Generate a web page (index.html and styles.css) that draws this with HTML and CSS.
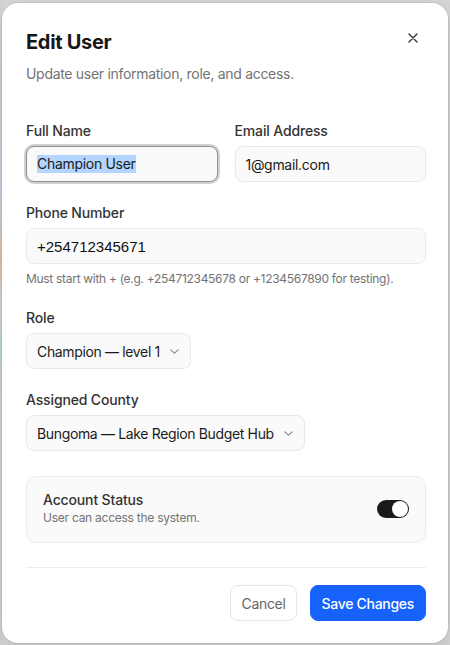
FILE: index.html
```html
<!DOCTYPE html>
<html lang="en">
<head>
<meta charset="utf-8">
<title>Edit User</title>
<link rel="stylesheet" href="styles.css">
</head>
<body>
<div class="backdrop">
  <div class="modal">
    <button class="close" aria-label="Close">
      <svg width="10" height="10" viewBox="0 0 10 10"><path d="M1 1L9 9M9 1L1 9" stroke="#333" stroke-width="1.4" stroke-linecap="round"/></svg>
    </button>
    <header class="head">
      <h1 class="title">Edit User</h1>
      <p class="desc">Update user information, role, and access.</p>
    </header>
    <div class="form">
      <div class="row2">
        <div class="field">
          <div class="label">Full Name</div>
          <div class="input focused"><span class="sel">Champion User</span></div>
        </div>
        <div class="field">
          <div class="label">Email Address</div>
          <div class="input">1@gmail.com</div>
        </div>
      </div>
      <div class="field">
        <div class="label">Phone Number</div>
        <div class="input tel">+254712345671</div>
        <div class="hint">Must start with + (e.g. +254712345678 or +1234567890 for testing).</div>
      </div>
      <div class="field">
        <div class="label">Role</div>
        <div class="select">Champion — level 1
          <svg class="chev" width="9" height="5" viewBox="0 0 9 5"><path d="M0.8 0.8L4.5 4.2L8.2 0.8" fill="none" stroke="#8a8a8a" stroke-width="1.1" stroke-linecap="round" stroke-linejoin="round"/></svg>
        </div>
      </div>
      <div class="field">
        <div class="label">Assigned County</div>
        <div class="select">Bungoma — Lake Region Budget Hub
          <svg class="chev" width="9" height="5" viewBox="0 0 9 5"><path d="M0.8 0.8L4.5 4.2L8.2 0.8" fill="none" stroke="#8a8a8a" stroke-width="1.1" stroke-linecap="round" stroke-linejoin="round"/></svg>
        </div>
      </div>
    </div>
    <div class="status">
      <div class="status-text">
        <div class="status-title">Account Status</div>
        <div class="status-sub">User can access the system.</div>
      </div>
      <div class="toggle"><div class="knob"></div></div>
    </div>
    <div class="divider"></div>
    <div class="footer">
      <button class="btn cancel">Cancel</button>
      <button class="btn save">Save Changes</button>
    </div>
  </div>
</div>
</body>
</html>
```
FILE: styles.css
```css
* { box-sizing: border-box; }
html, body { margin: 0; padding: 0; }
body {
  width: 450px;
  height: 645px;
  overflow: hidden;
  font-family: Inter, "Noto Sans", "Liberation Sans", sans-serif;
  letter-spacing: -0.3px;
  background:
    linear-gradient(to bottom, #d3d3d3 0, #c9d3e3 190px, #e3c3a8 262px, #d6d6d6 300px, #bfdcc8 345px, #d3d3d3 400px) left top / 2px 100% no-repeat,
    #d6d6d6;
}
.backdrop {
  padding: 3px 2px 2px 2px;
}
.modal {
  position: relative;
  width: 446px;
  height: 640px;
  background: #fff;
  border-radius: 16px;
  box-shadow: 0 0 0 1px rgba(0,0,0,0.06), 0 8px 24px rgba(0,0,0,0.12);
  padding: 25px 22px 22px 24px;
}
.close {
  position: absolute;
  top: 27px;
  right: 27px;
  width: 16px;
  height: 16px;
  padding: 0;
  border: 0;
  background: transparent;
  display: flex;
  align-items: center;
  justify-content: center;
}
.head { margin: 0; }
.title {
  margin: 0;
  font-size: 20px;
  line-height: 28px;
  font-weight: 650;
  color: #171717;
  letter-spacing: -0.3px;
}
.desc {
  margin: 8px 0 0;
  font-size: 14px;
  line-height: 20px;
  color: #737373;
}
.form {
  margin-top: 37px;
  display: flex;
  flex-direction: column;
  gap: 21px;
}
.row2 {
  display: grid;
  grid-template-columns: 1fr 1fr;
  gap: 17px;
}
.field {
  display: flex;
  flex-direction: column;
  align-items: flex-start;
}
.label {
  font-size: 14px;
  line-height: 20px;
  font-weight: 500;
  color: #333;
  margin-bottom: 5px;
  letter-spacing: -0.15px;
}
.input {
  width: 100%;
  height: 36px;
  border: 1px solid #e9e9e9;
  border-radius: 8px;
  background: #fafafa;
  padding: 0 10px;
  display: flex;
  align-items: center;
  font-size: 14px;
  color: #1a1a1a;
}
.input.tel {
  font-family: "Liberation Sans", Arial, sans-serif;
  font-size: 15px;
  letter-spacing: 0;
  color: #111;
}
.input.focused {
  border-color: #8f8f8f;
  box-shadow: 0 0 0 2px #d2d2d2;
}
.sel {
  background: #b4d5fe;
  line-height: 18px;
}
.hint {
  margin-top: 7px;
  font-size: 12px;
  line-height: 16px;
  color: #737373;
  letter-spacing: -0.3px;
}
.select {
  height: 36px;
  border: 1px solid #e9e9e9;
  border-radius: 8px;
  background: #fafafa;
  padding: 0 11px 0 10px;
  display: flex;
  align-items: center;
  gap: 10px;
  font-size: 14px;
  color: #1a1a1a;
  white-space: nowrap;
  letter-spacing: -0.35px;
}
.chev { flex: none; margin-top: 1px; }
.status {
  margin-top: 25px;
  border: 1px solid #ebebeb;
  border-radius: 10px;
  background: #fafafa;
  padding: 13px 16px 16px;
  display: flex;
  align-items: center;
  justify-content: space-between;
}
.status-title {
  font-size: 14px;
  line-height: 20px;
  font-weight: 500;
  color: #333;
  letter-spacing: -0.15px;
}
.status-sub {
  font-size: 12px;
  line-height: 16px;
  color: #737373;
  letter-spacing: -0.25px;
}
.toggle {
  width: 32px;
  height: 18px;
  border-radius: 9px;
  background: #1a1a1a;
  padding: 1px;
  display: flex;
  justify-content: flex-end;
  margin-top: 2px;
}
.knob {
  width: 16px;
  height: 16px;
  border-radius: 50%;
  background: #fff;
}
.divider {
  margin-top: 24px;
  height: 1px;
  background: #ededed;
}
.footer {
  padding-top: 17px;
  display: flex;
  justify-content: flex-end;
  gap: 13px;
}
.btn {
  height: 36px;
  border-radius: 8px;
  font-family: inherit;
  font-size: 14px;
  letter-spacing: -0.3px;
  padding: 0 11px;
  cursor: pointer;
}
.cancel {
  background: #fff;
  border: 1px solid #e5e5e5;
  color: #666;
  padding: 0 10px;
}
.save {
  background: #1662fb;
  border: 1px solid #1662fb;
  color: #fff;
  font-weight: 500;
}
```
